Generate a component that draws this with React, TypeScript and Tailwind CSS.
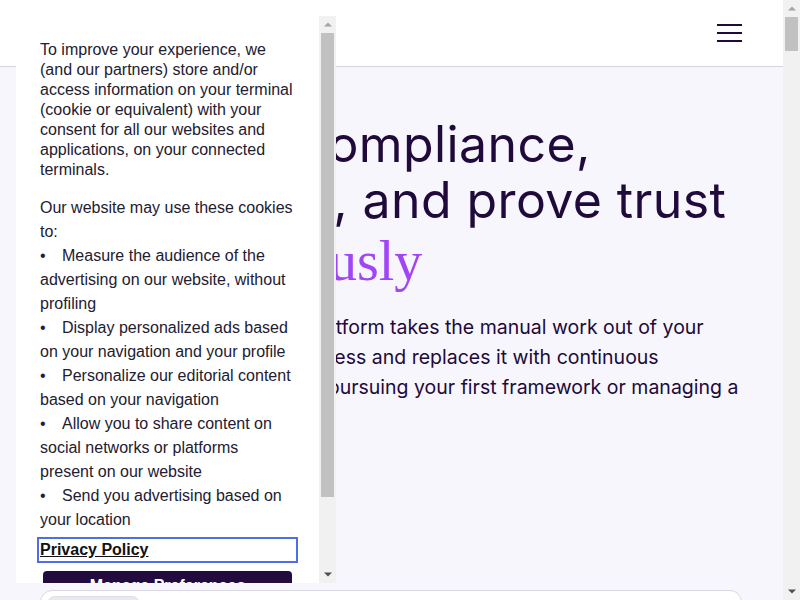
import React from 'react';

const sans = { fontFamily: 'Inter, "Noto Sans", sans-serif' };

function ScrollArrow({ dir, color }: { dir: 'up' | 'down'; color: string }) {
  return (
    <div className="h-[17px] flex items-center justify-center">
      <svg width="8" height="5" viewBox="0 0 8 5">
        {dir === 'up' ? (
          <polygon points="0,4.5 4,0.5 8,4.5" fill={color} />
        ) : (
          <polygon points="0,0.5 8,0.5 4,4.5" fill={color} />
        )}
      </svg>
    </div>
  );
}

const uses = [
  'Measure the audience of the advertising on our website, without profiling',
  'Display personalized ads based on your navigation and your profile',
  'Personalize our editorial content based on your navigation',
  'Allow you to share content on social networks or platforms present on our website',
  'Send you advertising based on your location',
];

function CookiePanel() {
  return (
    <div
      className="absolute left-[16px] top-[16px] w-[320px] h-[567px] bg-white flex overflow-hidden text-[16px] text-[#222030]"
      style={{ fontFamily: '"Liberation Sans", Arial, sans-serif' }}
    >
      <div className="flex-1 overflow-hidden px-[24px] pt-[24px]">
        <p className="leading-[20px]">
          To improve your experience, we (and our partners) store and/or access information on your
          terminal (cookie or equivalent) with your consent for all our websites and applications, on
          your connected terminals.
        </p>
        <p className="mt-[16px] leading-[24px]">Our website may use these cookies to:</p>
        <ul className="leading-[24px]">
          {uses.map((u) => (
            <li key={u}>
              <span className="inline-block w-[22px]">•</span>
              {u}
            </li>
          ))}
        </ul>
        <a
          href="#"
          className="block mt-[8px] leading-[20px] font-bold underline text-[#111] outline-2 outline-offset-1 outline-[#4f6de6]"
        >
          Privacy Policy
        </a>
        <button className="mt-[11px] mx-[3px] w-[249px] h-[40px] rounded-[4px] bg-[#230a3f] text-white font-bold text-[16px] leading-[20px] pb-[10px]">
          Manage Preferences
        </button>
      </div>
      <div className="w-[17px] bg-[#f1f1f1] flex flex-col">
        <ScrollArrow dir="up" color="#a3a3a3" />
        <div className="mx-[2px] h-[464px] bg-[#c1c1c1]" />
        <div className="flex-1" />
        <ScrollArrow dir="down" color="#505050" />
      </div>
    </div>
  );
}

export default function App() {
  return (
    <div className="relative w-[800px] h-[600px] flex overflow-hidden bg-white" style={sans}>
      <div className="flex-1 min-w-0 overflow-hidden flex flex-col">
        <header className="h-[67px] shrink-0 bg-white border-b border-[#d6d1de] flex items-center justify-end pr-[41px]">
          <button className="w-[25px] h-[18px] flex flex-col justify-between" aria-label="Menu">
            <span className="block h-[2px] bg-[#1f0a3b]" />
            <span className="block h-[2px] bg-[#1f0a3b]" />
            <span className="block h-[2px] bg-[#1f0a3b]" />
          </button>
        </header>
        <main className="flex-1 bg-[#f8f6fd] px-[40px] pt-[49px] text-[#200a3b]">
          <h1 className="text-[50px] leading-[56px] tracking-[0.4px] font-normal whitespace-nowrap">
            <span className="block ml-[15px]">Automate compliance,</span>
            <span className="block">manage risk, and prove trust</span>
            <span
              className="block mt-[2px] ml-[93px] text-[56px] leading-[62px] tracking-normal text-[#a145f6]"
              style={{ fontFamily: '"Liberation Serif", "Times New Roman", serif' }}
            >
              continuously
            </span>
          </h1>
          <p className="mt-[20px] ml-[21px] text-[19.5px] leading-[30px] whitespace-nowrap">
            Vanta's trust management platform takes the manual work out of your
            <br />
            security and compliance process and replaces it with continuous
            <br />
            automation—whether you're pursuing your first framework or managing a
            <br />
            complex program.
          </p>
          <div className="mt-[158px] w-[702px] h-[60px] bg-white border border-[#d9d6e0] rounded-t-[12px] px-[6px] pt-[5px]">
            <div className="w-[93px] h-[30px] rounded-[8px] bg-[#e9e8ee] border border-[#e0dee6]" />
          </div>
        </main>
      </div>
      <div className="w-[17px] shrink-0 bg-[#f1f1f1] flex flex-col">
        <ScrollArrow dir="up" color="#a3a3a3" />
        <div className="mx-[2px] h-[34px] bg-[#c1c1c1]" />
        <div className="flex-1" />
        <ScrollArrow dir="down" color="#505050" />
      </div>
      <CookiePanel />
    </div>
  );
}
